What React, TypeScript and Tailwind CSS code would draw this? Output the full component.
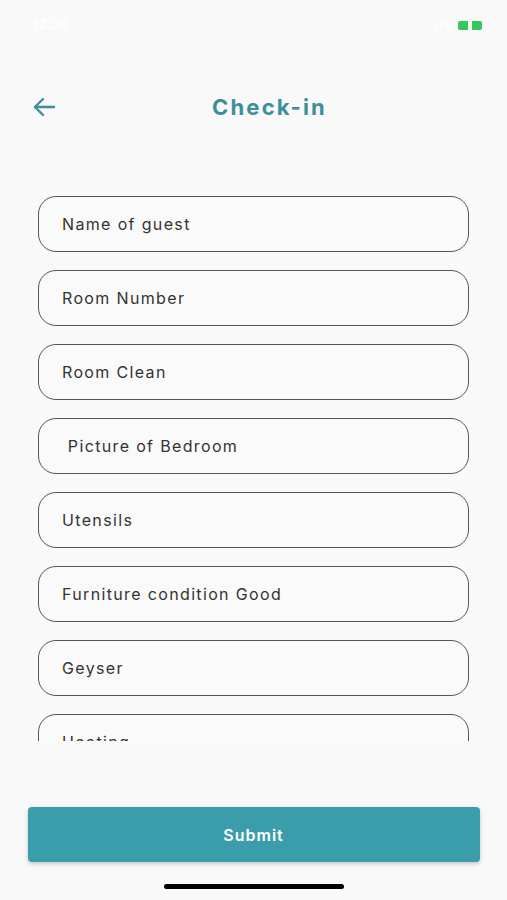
import React from 'react';

const fields = [
    'Name of guest',
    'Room Number',
    'Room Clean',
    ' Picture of Bedroom',
    'Utensils',
    'Furniture condition Good',
    'Geyser',
    'Heating',
];

const App: React.FC = () => {
    return (
        <div
            className="w-[507px] h-[900px] bg-[#f9f9f9] flex flex-col overflow-hidden"
            style={{ fontFamily: 'Inter, "Liberation Sans", Arial, sans-serif' }}
        >
            {/* status bar */}
            <div className="h-[52px] flex items-center justify-between pl-[33px] pr-[25px] pb-[2px]">
                <span className="text-[13px] font-bold text-white">12:30</span>
                <div className="flex items-center gap-[6px]">
                    <span className="text-[11px] text-white">LTE</span>
                    <div className="flex items-center">
                        <div className="w-[10px] h-[9px] bg-[#34c759] rounded-l-[2px]" />
                        <div className="w-[4px] h-[9px] bg-[#f3fbf5]" />
                        <div className="w-[10px] h-[9px] bg-[#34c759] rounded-r-[2px]" />
                    </div>
                </div>
            </div>

            {/* header */}
            <div className="h-[110px] flex items-center px-[33px]">
                <svg width="22" height="20" viewBox="0 0 22 20" fill="none" stroke="#3b8f9b" strokeWidth="2.4" strokeLinecap="round" strokeLinejoin="round">
                    <path d="M21 10H2" />
                    <path d="M10 2L2 10l8 8" />
                </svg>
                <h1 className="flex-1 text-center text-[22px] font-bold text-[#3b8f9b] tracking-[2.2px] pl-[10px]">Check-in</h1>
            </div>

            {/* form list */}
            <div className="h-[579px] overflow-hidden px-[38px] pt-[34px]">
                <div className="flex flex-col gap-[18px] w-[431px]">
                    {fields.map((label) => (
                        <div
                            key={label}
                            className="h-[56px] shrink-0 rounded-[18px] border-[1.5px] border-[#555] bg-[#fafafa] flex items-center px-[23px]"
                        >
                            <span className="text-[16px] text-[#333] whitespace-pre tracking-[1.35px]">{label}</span>
                        </div>
                    ))}
                </div>
            </div>

            {/* submit */}
            <div className="flex-1 flex flex-col items-center">
                <button className="mt-[66px] w-[452px] h-[55px] rounded-[4px] bg-[#399dab] text-white text-[16px] font-semibold shadow-[0_2px_4px_rgba(0,0,0,0.2)] tracking-[1px]">
                    Submit
                </button>
                <div className="mt-[22px] w-[180px] h-[5px] rounded-full bg-black" />
            </div>
        </div>
    );
};

export default App;
